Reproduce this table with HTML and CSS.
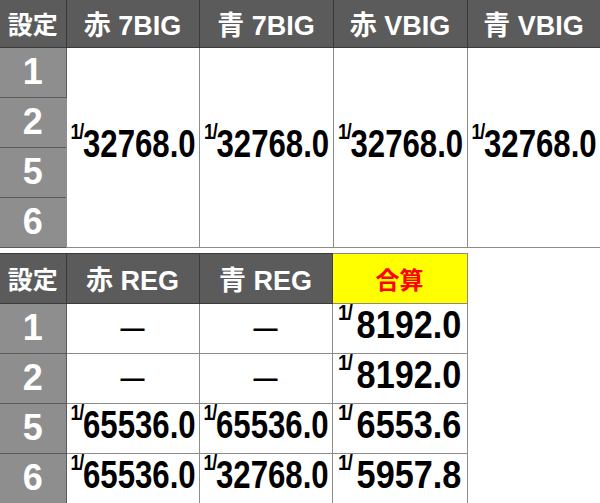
FILE: index.html
```html
<!DOCTYPE html>
<html lang="ja">
<head>
<meta charset="utf-8">
<link rel="stylesheet" href="styles.css">
</head>
<body>
<div class="page">
  <table class="t t-top">
    <colgroup><col class="c-set"><col class="c-133"><col class="c-134"><col class="c-134"><col class="c-133"></colgroup>
    <thead>
      <tr class="hrow top-h"><th class="h-set">設定</th><th>赤 7BIG</th><th>青 7BIG</th><th>赤 VBIG</th><th>青 VBIG</th></tr>
    </thead>
    <tbody>
      <tr class="drow">
        <td class="set">1</td>
        <td class="val" rowspan="4"><div class="v"><span class="one">1/</span><span class="num">32768.0</span></div></td>
        <td class="val" rowspan="4"><div class="v"><span class="one">1/</span><span class="num">32768.0</span></div></td>
        <td class="val" rowspan="4"><div class="v"><span class="one">1/</span><span class="num">32768.0</span></div></td>
        <td class="val" rowspan="4"><div class="v"><span class="one">1/</span><span class="num">32768.0</span></div></td>
      </tr>
      <tr class="drow"><td class="set">2</td></tr>
      <tr class="drow"><td class="set">5</td></tr>
      <tr class="drow"><td class="set">6</td></tr>
    </tbody>
  </table>

  <table class="t t-bot">
    <colgroup><col class="c-set"><col class="c-133"><col class="c-133"><col class="c-135"></colgroup>
    <thead>
      <tr class="hrow bot-h"><th class="h-set">設定</th><th>赤 REG</th><th>青 REG</th><th class="h-total">合算</th></tr>
    </thead>
    <tbody>
      <tr class="drow">
        <td class="set">1</td>
        <td class="val"><span class="dash">—</span></td>
        <td class="val"><span class="dash">—</span></td>
        <td class="val"><div class="v total"><span class="one">1/</span><span class="num">8192.0</span></div></td>
      </tr>
      <tr class="drow">
        <td class="set">2</td>
        <td class="val"><span class="dash">—</span></td>
        <td class="val"><span class="dash">—</span></td>
        <td class="val"><div class="v total"><span class="one">1/</span><span class="num">8192.0</span></div></td>
      </tr>
      <tr class="drow">
        <td class="set">5</td>
        <td class="val"><div class="v"><span class="one">1/</span><span class="num">65536.0</span></div></td>
        <td class="val"><div class="v"><span class="one">1/</span><span class="num">65536.0</span></div></td>
        <td class="val"><div class="v total"><span class="one">1/</span><span class="num">6553.6</span></div></td>
      </tr>
      <tr class="drow">
        <td class="set">6</td>
        <td class="val"><div class="v"><span class="one">1/</span><span class="num">65536.0</span></div></td>
        <td class="val"><div class="v"><span class="one">1/</span><span class="num">32768.0</span></div></td>
        <td class="val"><div class="v total"><span class="one">1/</span><span class="num">5957.8</span></div></td>
      </tr>
    </tbody>
  </table>
</div>
</body>
</html>
```

FILE: styles.css
```css
html, body {
  margin: 0;
  padding: 0;
  background: #ffffff;
}

body {
  font-family: "Liberation Sans", "Noto Sans CJK JP", sans-serif;
  font-weight: bold;
  color: #000;
}

.page {
  display: flex;
  flex-direction: column;
  align-items: flex-start;
  gap: 5px;
}

.t {
  border-collapse: collapse;
  table-layout: fixed;
}

.t-top { width: 600px; }
.t-bot { width: 467px; }

.c-set { width: 66px; }
.c-133 { width: 133px; }
.c-134 { width: 134px; }
.c-135 { width: 135px; }

.t th {
  background: #5b5b5b;
  color: #ffffff;
  padding: 0;
  font-size: 27px;
  font-weight: bold;
  text-align: center;
  border: 1px solid #3a3a3a;
  white-space: nowrap;
}

.t-top th { border-top: none; }
.t th:first-child { border-left: none; }

.top-h { height: 47px; }
.bot-h { height: 50px; }

.t th.h-set { font-size: 25px; }

.t th.h-total {
  background: #ffff00;
  color: #ff0000;
  font-size: 24px;
  border-color: #8a8a8a;
  border-bottom-color: #8a8a8a;
}

.drow { height: 50px; }

.t td {
  padding: 0;
  border: 1px solid #8c8c8c;
  vertical-align: middle;
}

.t td.set {
  background: #8e8e8e;
  color: #ffffff;
  font-size: 36px;
  text-align: center;
  border-color: #5a5a5a;
  border-left: none;
}

.t td.val {
  background: #ffffff;
  text-align: center;
}

.v {
  display: flex;
  justify-content: center;
  align-items: flex-start;
  white-space: nowrap;
  transform: translateY(-3px) scaleX(0.82);
  transform-origin: center;
}

.one {
  font-size: 22px;
  line-height: 22px;
  margin-top: -3px;
  letter-spacing: -1.5px;
}

.num {
  font-size: 38px;
  line-height: 40px;
}

.v.total {
  justify-content: flex-start;
  transform: translateY(-3px);
}

.v.total .one {
  flex: 0 0 auto;
  transform: translateX(5px) scaleX(0.88);
  transform-origin: left top;
}

.v.total .num {
  flex: 0 0 auto;
  margin-left: auto;
  transform: translateX(-5px) scaleX(0.9);
  transform-origin: right center;
}

.dash {
  font-size: 24px;
  line-height: 24px;
  font-family: "Liberation Sans", sans-serif;
}
```
